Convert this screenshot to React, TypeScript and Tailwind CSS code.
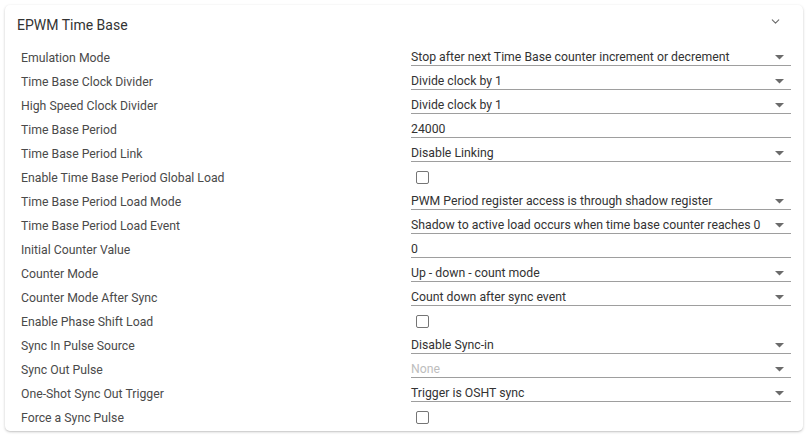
import { ChevronDown } from 'lucide-react';

type Field =
  | { label: string; kind: 'select'; value: string; disabled?: boolean }
  | { label: string; kind: 'text'; value: string }
  | { label: string; kind: 'check' };

const fields: Field[] = [
  { label: 'Emulation Mode', kind: 'select', value: 'Stop after next Time Base counter increment or decrement' },
  { label: 'Time Base Clock Divider', kind: 'select', value: 'Divide clock by 1' },
  { label: 'High Speed Clock Divider', kind: 'select', value: 'Divide clock by 1' },
  { label: 'Time Base Period', kind: 'text', value: '24000' },
  { label: 'Time Base Period Link', kind: 'select', value: 'Disable Linking' },
  { label: 'Enable Time Base Period Global Load', kind: 'check' },
  { label: 'Time Base Period Load Mode', kind: 'select', value: 'PWM Period register access is through shadow register' },
  { label: 'Time Base Period Load Event', kind: 'select', value: 'Shadow to active load occurs when time base counter reaches 0' },
  { label: 'Initial Counter Value', kind: 'text', value: '0' },
  { label: 'Counter Mode', kind: 'select', value: 'Up - down - count mode' },
  { label: 'Counter Mode After Sync', kind: 'select', value: 'Count down after sync event' },
  { label: 'Enable Phase Shift Load', kind: 'check' },
  { label: 'Sync In Pulse Source', kind: 'select', value: 'Disable Sync-in' },
  { label: 'Sync Out Pulse', kind: 'select', value: 'None', disabled: true },
  { label: 'One-Shot Sync Out Trigger', kind: 'select', value: 'Trigger is OSHT sync' },
  { label: 'Force a Sync Pulse', kind: 'check' },
];

function Caret() {
  return (
    <svg width="9" height="5" viewBox="0 0 9 5" className="mr-[7px] mb-[5px] shrink-0">
      <path d="M0 0h9L4.5 4.5z" fill="#6b6b6b" />
    </svg>
  );
}

function Control({ field }: { field: Field }) {
  if (field.kind === 'check') {
    return (
      <div className="flex h-6 items-end pb-[2px] pl-[5px]">
        <span className="block h-[13px] w-[13px] rounded-[2px] border-[1.5px] border-[#757575] bg-white" />
      </div>
    );
  }
  const disabled = field.kind === 'select' && field.disabled;
  return (
    <div className="flex h-6 items-end justify-between border-b border-[#9e9e9e]">
      <span
        className={[
          'text-[12.25px] leading-[15px] whitespace-nowrap',
          disabled ? 'text-[#bdbdbd]' : 'text-[#333333]',
        ].join(' ')}
      >
        {field.value}
      </span>
      {field.kind === 'select' && <Caret />}
    </div>
  );
}

export default function App() {
  return (
    <div className="min-h-screen bg-white p-[5px] font-['Roboto',sans-serif]">
      <div className="w-[798px] rounded-[5px] bg-white pb-[5px] shadow-[0_1px_3px_rgba(0,0,0,0.2),0_1px_1px_rgba(0,0,0,0.06)]">
        {/* Header */}
        <div className="flex h-[37px] items-end justify-between pb-[9px] pl-3 pr-[21px]">
          <h2 className="text-[14px] leading-4 text-[#333333]">EPWM Time Base</h2>
          <ChevronDown size={13} strokeWidth={2} className="mt-[10px] self-start text-[#6b6b6b]" />
        </div>

        {/* Fields */}
        <div className="px-4">
          {fields.map((f) => (
            <div key={f.label} className="grid grid-cols-[390px_380px]">
              <div className="flex h-6 items-end">
                <span className="text-[12.25px] leading-[15px] text-[#4a4a4a]">{f.label}</span>
              </div>
              <Control field={f} />
            </div>
          ))}
        </div>
      </div>
    </div>
  );
}
